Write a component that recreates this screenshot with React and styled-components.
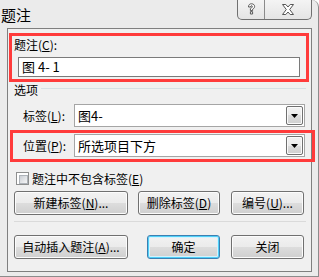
import React from 'react';
import styled, { createGlobalStyle, css } from 'styled-components';

const Global = createGlobalStyle`
  html, body { margin: 0; padding: 0; background: #ffffff; }
  body {
    font-family: "Noto Sans CJK SC", "Microsoft YaHei", sans-serif;
    font-size: 12px;
    color: #000;
  }
  * { box-sizing: border-box; }
`;

const Window = styled.div`
  width: 319px;
  height: 277px;
  background: #ebebeb;
  border-right: 1px solid #8c8c8c;
  border-bottom: 1px solid #8c8c8c;
  border-top-right-radius: 7px;
  display: flex;
  flex-direction: column;
  overflow: hidden;
`;

const TitleBar = styled.div`
  height: 28px;
  flex: none;
  display: flex;
  align-items: flex-start;
  padding-right: 6px;
`;

const Title = styled.div`
  margin-top: 6px;
  padding-left: 1px;
  font-size: 15px;
  line-height: 18px;
`;

const CaptionGroup = styled.div`
  margin-left: auto;
  display: flex;
  height: 20px;
  border: 1px solid #707070;
  border-top: none;
  border-radius: 0 0 5px 5px;
  overflow: hidden;
  background: linear-gradient(#f4f4f4, #e4e4e4);
`;

const CaptionButton = styled.div`
  width: ${p => p.$w}px;
  display: flex;
  align-items: center;
  justify-content: center;
  border-left: ${p => (p.$divider ? '1px solid #8a8a8a' : 'none')};
  padding-bottom: 1px;
`;

const Client = styled.div`
  flex: 1;
  margin: 0 6px 4px 7px;
  border: 1px solid #7f7f7f;
  background: #f0f0f0;
  display: flex;
  flex-direction: column;
`;

const RedBox = styled.div`
  border: 3px solid #ff3b3b;
  margin: ${p => p.$margin};
  width: ${p => p.$w}px;
  height: ${p => p.$h}px;
  flex: none;
`;

const FieldLabel = styled.div`
  padding-left: 2px;
  margin-top: 1px;
  line-height: 16px;
`;

const TextBox = styled.div`
  margin: 4px 0 0 6px;
  width: 282px;
  height: 20px;
  border: 1px solid #7a7a7a;
  background: #fff;
  padding-left: 3px;
  font-size: 13px;
  line-height: 18px;
`;

const GroupHeader = styled.div`
  display: flex;
  align-items: flex-start;
  padding-left: 6px;
  line-height: 16px;
  height: 16px;
`;

const GroupLine = styled.div`
  flex: 1;
  height: 1px;
  margin: 6px 5px 0 3px;
  background: #d5dfe5;
`;

const Row = styled.div`
  display: flex;
  align-items: center;
  padding-left: ${p => p.$pl}px;
  margin-top: ${p => p.$mt || 0}px;
  height: 23px;
`;

const RowLabel = styled.div`
  width: 51px;
  flex: none;
  line-height: 16px;
`;

const Combo = styled.div`
  width: 231px;
  height: 23px;
  display: flex;
  border: 1px solid #a5a5a5;
  background: #fff;
  padding: 1px;
`;

const ComboText = styled.div`
  flex: 1;
  padding-left: 2px;
  font-size: 13px;
  line-height: 19px;
`;

const DropButton = styled.div`
  width: 17px;
  flex: none;
  border: 1px solid #707070;
  border-radius: 2px;
  background: linear-gradient(#f2f2f2 0%, #ebebeb 50%, #dddddd 50%, #cfcfcf 100%);
  box-shadow: inset 0 0 0 1px #fafafa;
  display: flex;
  align-items: center;
  justify-content: center;
`;

const CheckRow = styled.label`
  display: flex;
  align-items: center;
  margin-top: 10px;
  padding-left: 8px;
  height: 13px;
`;

const CheckBox = styled.span`
  width: 13px;
  height: 13px;
  border: 1px solid #8e8f8f;
  background: #fff;
  padding: 2px;
  display: block;
  flex: none;
  &::after {
    content: '';
    display: block;
    width: 7px;
    height: 7px;
    background: linear-gradient(135deg, #cbcfd5, #f6f6f6);
    border: 1px solid #aeb3b9;
  }
`;

const CheckText = styled.span`
  margin-left: 3px;
  line-height: 14px;
`;

const ButtonRow = styled.div`
  display: flex;
  padding-left: 6px;
  margin-top: ${p => p.$mt}px;
`;

const Button = styled.div`
  width: ${p => p.$w}px;
  margin-left: ${p => p.$ml || 0}px;
  height: 24px;
  flex: none;
  border: 1px solid #707070;
  border-radius: 3px;
  background: linear-gradient(#f2f2f2 0%, #ebebeb 50%, #dddddd 50%, #cfcfcf 100%);
  box-shadow: inset 0 0 0 1px #fcfcfc;
  display: flex;
  align-items: center;
  justify-content: center;
  line-height: 16px;
  ${p =>
    p.$default &&
    css`
      border-color: #3c7fb1;
      box-shadow: inset 0 0 0 1px #4fd0f8, inset 0 0 0 2px #d4f2fd;
    `}
`;

const Separator = styled.div`
  margin: 6px 0 0 6px;
  width: 292px;
  height: 1px;
  background: #dadada;
`;

const HelpIcon = () => (
  <svg width="9" height="12" viewBox="0 0 9 12">
    <path
      d="M1.5 4 C1.5 1.5 3 0.8 4.5 0.8 C6.5 0.8 7.6 2 7.6 3.5 C7.6 5 6.5 5.6 5.6 6.3 L5.6 7.6 L3.4 7.6 L3.4 5.7 C4.2 5 5.3 4.6 5.3 3.6 C5.3 3 5 2.7 4.5 2.7 C3.9 2.7 3.7 3.2 3.7 4 Z M3.4 8.7 L5.6 8.7 L5.6 11 L3.4 11 Z"
      fill="#fff"
      stroke="#555"
      strokeWidth="1"
      strokeLinejoin="round"
    />
  </svg>
);

const CloseIcon = () => (
  <svg width="12" height="11" viewBox="0 0 12 11">
    <path
      d="M0.5 0.5 L3.8 0.5 L6 3 L8.2 0.5 L11.5 0.5 L7.7 5.5 L11.5 10.5 L8.2 10.5 L6 8 L3.8 10.5 L0.5 10.5 L4.3 5.5 Z"
      fill="#fff"
      stroke="#555"
      strokeWidth="1"
      strokeLinejoin="round"
    />
  </svg>
);

const Arrow = () => (
  <svg width="7" height="4" viewBox="0 0 7 4">
    <path d="M0 0 L7 0 L3.5 4 Z" fill="#000" />
  </svg>
);

export default function App() {
  return (
    <>
      <Global />
      <Window>
        <TitleBar>
          <Title>题注</Title>
          <CaptionGroup>
            <CaptionButton $w={26}>
              <HelpIcon />
            </CaptionButton>
            <CaptionButton $w={47} $divider>
              <CloseIcon />
            </CaptionButton>
          </CaptionGroup>
        </TitleBar>
        <Client>
          <RedBox $margin="4px 0 0 1px" $w={300} $h={49}>
            <FieldLabel>
              题注(<u>C</u>):
            </FieldLabel>
            <TextBox>图 4- 1</TextBox>
          </RedBox>
          <GroupHeader>
            选项
            <GroupLine />
          </GroupHeader>
          <Row $pl={15} $mt={6}>
            <RowLabel>
              标签(<u>L</u>):
            </RowLabel>
            <Combo>
              <ComboText>图4-</ComboText>
              <DropButton>
                <Arrow />
              </DropButton>
            </Combo>
          </Row>
          <RedBox $margin="3px 0 0 2px" $w={305} $h={32}>
            <Row $pl={10} $mt={1}>
              <RowLabel>
                位置(<u>P</u>):
              </RowLabel>
              <Combo>
                <ComboText>所选项目下方</ComboText>
                <DropButton>
                  <Arrow />
                </DropButton>
              </Combo>
            </Row>
          </RedBox>
          <CheckRow>
            <CheckBox />
            <CheckText>
              题注中不包含标签(<u>E</u>)
            </CheckText>
          </CheckRow>
          <ButtonRow $mt={6}>
            <Button $w={114}>
              新建标签(<u>N</u>)...
            </Button>
            <Button $w={82} $ml={10}>
              删除标签(<u>D</u>)
            </Button>
            <Button $w={73} $ml={11}>
              编号(<u>U</u>)...
            </Button>
          </ButtonRow>
          <Separator />
          <ButtonRow $mt={13}>
            <Button $w={114}>
              自动插入题注(<u>A</u>)...
            </Button>
            <Button $w={73} $ml={19} $default>
              确定
            </Button>
            <Button $w={73} $ml={11}>
              关闭
            </Button>
          </ButtonRow>
        </Client>
      </Window>
    </>
  );
}
